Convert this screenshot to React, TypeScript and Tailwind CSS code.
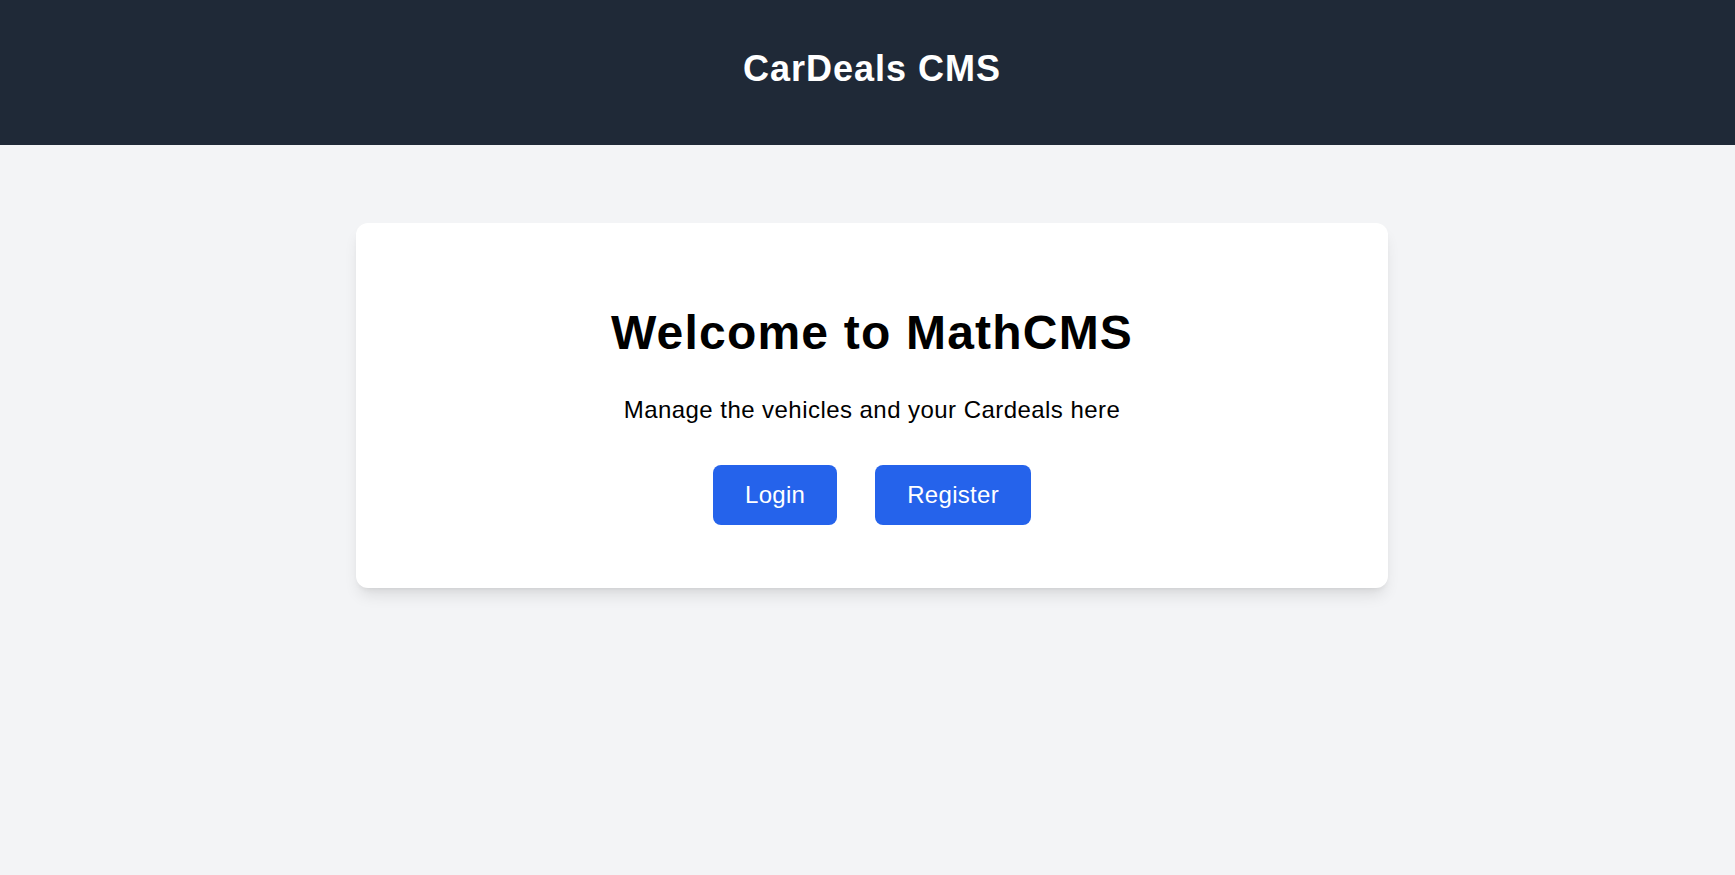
export default function App() {
  return (
    <div
      className="min-h-[875px] bg-[#f3f4f6] text-black"
      style={{ fontFamily: '"Liberation Sans", Arial, sans-serif' }}
    >
      <header className="bg-[#1f2937] pt-[49px] pb-[56px] pl-[9px] text-center">
        <h1 className="text-[36px] leading-[40px] font-bold text-white tracking-[1px]">
          CarDeals CMS
        </h1>
      </header>
      <main className="pt-[78px]">
        <div className="ml-[356px] w-[1032px] bg-white rounded-xl shadow-lg pt-[86px] pb-[63px] flex flex-col items-center">
          <h2 className="text-[48px] leading-[48px] font-bold tracking-[1.2px]">
            Welcome to MathCMS
          </h2>
          <p className="mt-[37px] text-[24px] leading-[32px] tracking-[0.45px]">
            Manage the vehicles and your Cardeals here
          </p>
          <div className="mt-[39px] flex gap-[38px]">
            <button className="h-[60px] px-8 rounded-lg bg-[#2563eb] text-white text-[24px] leading-[32px] tracking-[0.3px]">
              Login
            </button>
            <button className="h-[60px] px-8 rounded-lg bg-[#2563eb] text-white text-[24px] leading-[32px] tracking-[0.3px]">
              Register
            </button>
          </div>
        </div>
      </main>
    </div>
  );
}
